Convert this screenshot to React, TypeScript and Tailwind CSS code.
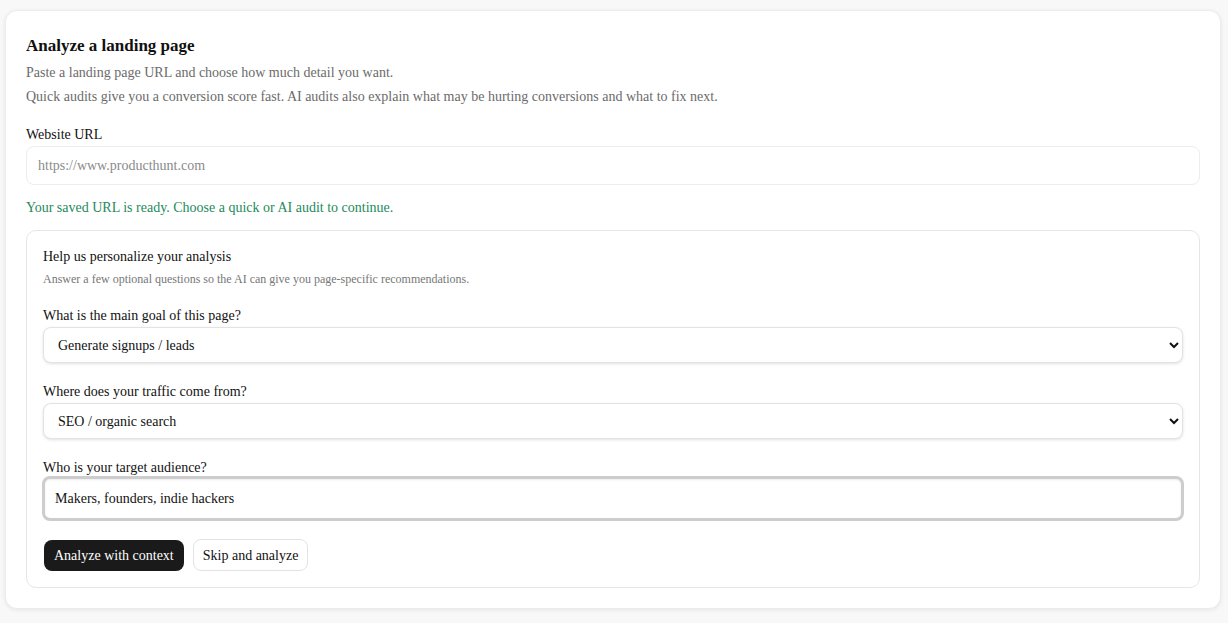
import React, { useState } from 'react';

const serif = { fontFamily: '"Liberation Serif", "Times New Roman", serif' };

const Field = ({ label, children }: { label: string; children: React.ReactNode }) => (
  <div className="flex flex-col">
    <label className="text-[14px] leading-[20px] text-[#111] mb-[1px]">{label}</label>
    {children}
  </div>
);

const SelectBox = ({ value, options, onChange }: { value: string; options: string[]; onChange: (v: string) => void }) => (
  <select
    value={value}
    onChange={(e) => onChange(e.target.value)}
    className="h-[36px] w-full rounded-[8px] border border-[#e3e3e3] bg-white pl-[10px] pr-[6px] text-[14px] text-[#111] shadow-[0_1px_3px_rgba(0,0,0,0.12)] outline-none"
  >
    {options.map((o) => (
      <option key={o}>{o}</option>
    ))}
  </select>
);

export default function App() {
  const [url, setUrl] = useState('');
  const [goal, setGoal] = useState('Generate signups / leads');
  const [traffic, setTraffic] = useState('SEO / organic search');
  const [audience, setAudience] = useState('Makers, founders, indie hackers');

  return (
    <div className="min-h-screen bg-[#f8f8f8] pl-[5px] pr-[7px] pt-[10px] pb-[14px]" style={serif}>
      <div className="rounded-[12px] border border-[#ececec] bg-white px-[20px] pt-[24px] pb-[20px] shadow-[0_1px_4px_rgba(0,0,0,0.08)]">
        {/* Heading */}
        <h1 className="text-[17px] font-bold leading-[22px] text-[#111]">Analyze a landing page</h1>
        <p className="mt-[4px] text-[14px] leading-[24px] text-[#6b6b6b]">
          Paste a landing page URL and choose how much detail you want.
        </p>
        <p className="text-[14px] leading-[24px] text-[#6b6b6b]">
          Quick audits give you a conversion score fast. AI audits also explain what may be hurting conversions and what to fix next.
        </p>

        {/* URL input */}
        <div className="mt-[16px] flex flex-col">
          <label className="text-[14px] leading-[20px] text-[#111] mb-[1px]">Website URL</label>
          <input
            value={url}
            onChange={(e) => setUrl(e.target.value)}
            placeholder="https://www.producthunt.com"
            className="h-[39px] w-full rounded-[8px] border border-[#ededed] bg-white px-[11px] text-[14px] text-[#111] placeholder:text-[#8a8a8a] outline-none"
          />
        </div>

        <p className="mt-[13px] text-[14px] leading-[20px] text-[#1e8a5c]">
          Your saved URL is ready. Choose a quick or AI audit to continue.
        </p>

        {/* Context panel */}
        <div className="mt-[12px] rounded-[10px] border border-[#e6e6e6] bg-white px-[16px] pt-[16px] pb-[16px]">
          <h2 className="text-[14px] leading-[20px] text-[#111]">Help us personalize your analysis</h2>
          <p className="mt-[4px] text-[12px] leading-[16px] text-[#777]">
            Answer a few optional questions so the AI can give you page-specific recommendations.
          </p>

          <div className="mt-[19px] flex flex-col gap-[19px]">
            <Field label="What is the main goal of this page?">
              <SelectBox
                value={goal}
                onChange={setGoal}
                options={['Generate signups / leads', 'Sell a product', 'Book demos', 'Grow a newsletter']}
              />
            </Field>
            <Field label="Where does your traffic come from?">
              <SelectBox
                value={traffic}
                onChange={setTraffic}
                options={['SEO / organic search', 'Paid ads', 'Social media', 'Email']}
              />
            </Field>
            <div className="flex flex-col">
              <label className="text-[14px] leading-[20px] text-[#111] mb-[-2px]">Who is your target audience?</label>
              <input
                value={audience}
                onChange={(e) => setAudience(e.target.value)}
                className="-mx-[1px] h-[45px] rounded-[8px] border-[3px] border-[#cdcdcd] bg-white px-[10px] text-[14px] text-[#111] outline-none shadow-[inset_0_1px_2px_rgba(0,0,0,0.08)]"
              />
            </div>
          </div>

          {/* Actions */}
          <div className="mt-[18px] flex items-center gap-[9px] pl-[1px]">
            <button className="h-[31px] rounded-[8px] bg-[#1a1a1a] px-[10px] text-[14px] text-white">
              Analyze with context
            </button>
            <button className="h-[32px] rounded-[8px] border border-[#e3e3e3] bg-white px-[9px] text-[14px] text-[#111]">
              Skip and analyze
            </button>
          </div>
        </div>
      </div>
    </div>
  );
}
